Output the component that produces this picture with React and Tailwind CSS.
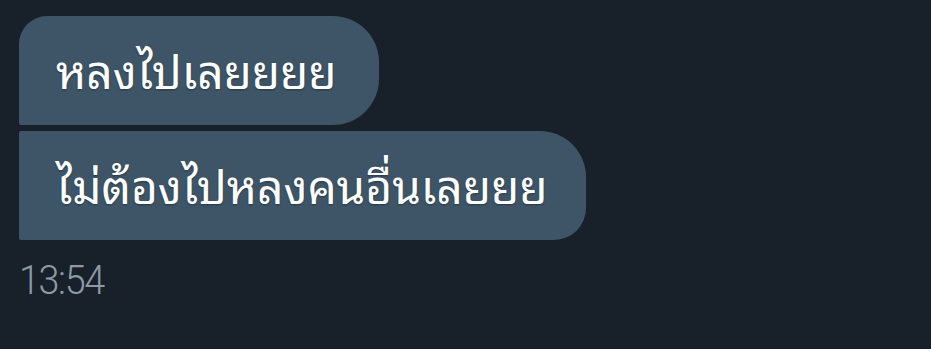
import React from 'react';

const thai = { fontFamily: '"Noto Sans Thai Looped", "Noto Serif Thai", "Noto Sans Thai", "Noto Sans", sans-serif' };

function Bubble({ children, className }) {
  return (
    <div
      className={`flex h-[109px] items-center self-start bg-[#3d5567] pb-[4px] pl-[37px] text-[46px] text-white ${className}`}
      style={thai}
    >
      <span className="[text-shadow:0_1px_2px_rgba(0,0,0,0.35)]">{children}</span>
    </div>
  );
}

export default function App() {
  return (
    <div className="flex h-[349px] w-[931px] flex-col overflow-hidden bg-[#18202a] pl-[19px] pt-[16px]">
      <Bubble className="pr-[42px] rounded-tl-[28px] rounded-tr-[46px] rounded-br-[46px] rounded-bl-[2px]">
        หลงไปเลยยยย
      </Bubble>
      <div className="h-[6px]" />
      <Bubble className="pr-[39px] rounded-tl-[2px] rounded-tr-[46px] rounded-br-[32px] rounded-bl-[2px]">
        ไม่ต้องไปหลงคนอื่นเลยยย
      </Bubble>
      <div className="mt-[20px] origin-left scale-x-[0.92] text-[41px] font-light leading-none tracking-[-1.5px] text-[#8c9aa6]" style={{ fontFamily: 'Roboto, sans-serif' }}>
        13:54
      </div>
    </div>
  );
}
